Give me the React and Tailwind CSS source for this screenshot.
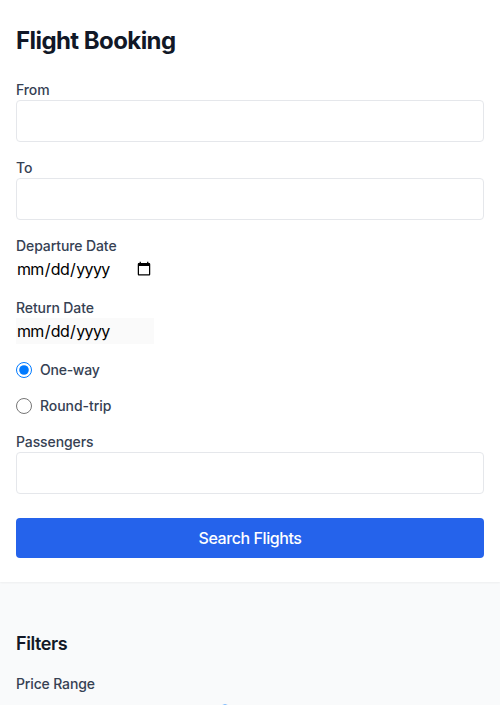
import React, { useState } from "react";

const TRIPS = [
  { value: "one-way", label: "One-way", tracking: "tracking-[-0.25px]" },
  { value: "round-trip", label: "Round-trip", tracking: "tracking-[-0.06px]" },
];

const Field = ({ id, label, children }) => (
  <div className="flex flex-col items-start">
    <label htmlFor={id} className="text-sm font-medium tracking-[-0.1px] text-gray-700">
      {label}
    </label>
    {children}
  </div>
);

const TextInput = (props) => (
  <input
    className="w-full h-[42px] px-3 py-2 bg-white border border-[#e5e7eb] rounded outline-none"
    {...props}
  />
);

const App = () => {
  const [trip, setTrip] = useState("one-way");
  const [price, setPrice] = useState(445);

  return (
    <div className="h-screen overflow-hidden bg-[#f9fafb] font-['Inter',sans-serif]">
      {/* Booking form */}
      <section className="relative bg-white px-4 pt-[25px] pb-6 shadow-[0_1px_2px_0_rgba(0,0,0,0.05)]">
        <h1 className="mb-[23px] text-2xl font-bold tracking-[-0.57px] text-[#111827]">
          Flight Booking
        </h1>
        <form className="flex flex-col gap-4" onSubmit={(e) => e.preventDefault()}>
          <Field id="from" label="From">
            <TextInput id="from" type="text" />
          </Field>
          <Field id="to" label="To">
            <TextInput id="to" type="text" />
          </Field>
          <Field id="departure" label="Departure Date">
            <input
              id="departure"
              type="date"
              className="w-[138px] h-[26px] tracking-[-0.66px] text-black"
            />
          </Field>
          <Field id="return" label="Return Date">
            <input
              id="return"
              type="date"
              disabled={trip === "one-way"}
              className="w-[138px] h-[26px] tracking-[-0.66px] text-black bg-[#fafafa]"
            />
          </Field>
          {TRIPS.map((t) => (
            <label
              key={t.value}
              className={`flex items-center gap-2 text-sm font-medium text-gray-700 ${t.tracking}`}
            >
              <input
                type="radio"
                name="trip"
                value={t.value}
                checked={trip === t.value}
                onChange={() => setTrip(t.value)}
                className="w-4 h-4 accent-[#007aff]"
              />
              {t.label}
            </label>
          ))}
          <Field id="passengers" label="Passengers">
            <TextInput id="passengers" type="number" />
          </Field>
          <button
            type="submit"
            className="mt-2 h-10 w-full rounded bg-[#2563eb] font-medium tracking-[-0.42px] text-white"
          >
            Search Flights
          </button>
        </form>
      </section>

      {/* Filters */}
      <section className="px-4 pt-12">
        <h2 className="mb-4 text-lg font-semibold tracking-[-0.4px] text-[#111827]">Filters</h2>
        <label
          htmlFor="price"
          className="block text-sm font-medium tracking-[-0.15px] text-gray-700"
        >
          Price Range
        </label>
        <input
          id="price"
          type="range"
          min="0"
          max="1000"
          value={price}
          onChange={(e) => setPrice(Number(e.target.value))}
          className="mt-2.5 block h-4 w-full accent-[#007aff]"
        />
      </section>
    </div>
  );
};

export default App;
